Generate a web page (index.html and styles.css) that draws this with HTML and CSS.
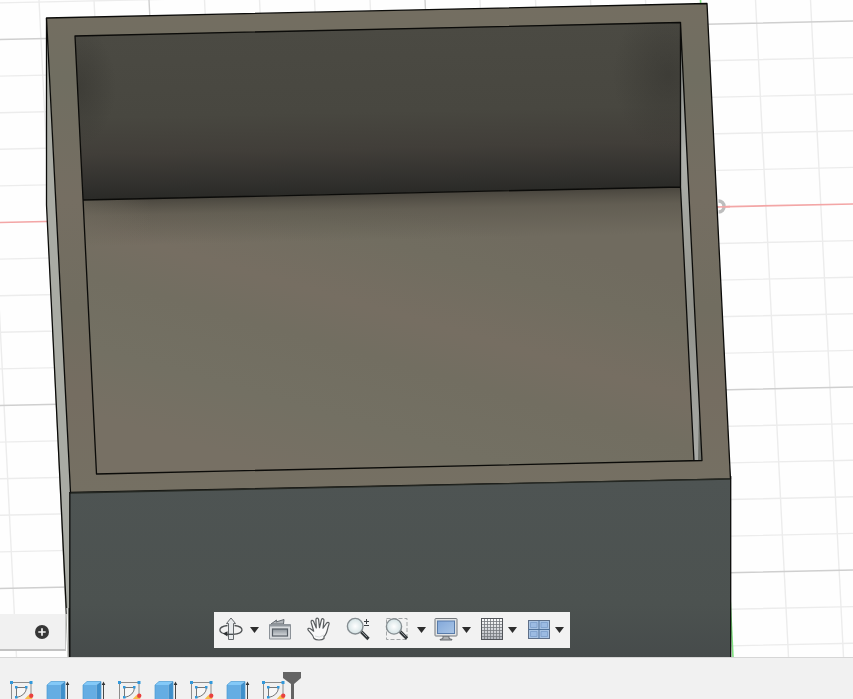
FILE: index.html
```
<!DOCTYPE html>
<html lang="en">
<head>
<meta charset="utf-8">
<title>Model viewport</title>
<link rel="stylesheet" href="styles.css">
</head>
<body>
<div class="app">
<main class="viewport">
<svg class="scene" viewBox="0 0 853 657">
  <defs>
    <linearGradient id="rim" x1="0" y1="0" x2="0" y2="1"><stop offset="0" stop-color="#746e61"/><stop offset=".15" stop-color="#706e61"/><stop offset=".4" stop-color="#756e62"/><stop offset=".62" stop-color="#716d60"/><stop offset=".8" stop-color="#756d61"/><stop offset="1" stop-color="#757063"/></linearGradient>
    <linearGradient id="back" gradientUnits="userSpaceOnUse" x1="380" y1="28" x2="383.5" y2="195"><stop offset="0" stop-color="#4b4a43"/><stop offset=".5" stop-color="#484740"/><stop offset=".72" stop-color="#413e39"/><stop offset=".9" stop-color="#32312e"/><stop offset="1" stop-color="#292926"/></linearGradient>
    <linearGradient id="floor" gradientUnits="userSpaceOnUse" x1="400" y1="200" x2="320" y2="480"><stop offset="0" stop-color="#706b5f"/><stop offset=".15" stop-color="#716d60"/><stop offset=".38" stop-color="#766e62"/><stop offset=".54" stop-color="#726e61"/><stop offset=".78" stop-color="#737063"/><stop offset="1" stop-color="#777064"/></linearGradient>
    <linearGradient id="contact" gradientUnits="userSpaceOnUse" x1="380" y1="193.500" x2="381" y2="240"><stop offset="0" stop-color="#3c3933" stop-opacity=".75"/><stop offset=".35" stop-color="#49453c" stop-opacity=".35"/><stop offset="1" stop-color="#49453c" stop-opacity="0"/></linearGradient>
    <linearGradient id="front" x1="0" y1="0" x2="0" y2="1"><stop offset="0" stop-color="#4e5453"/><stop offset=".7" stop-color="#4c5250"/><stop offset="1" stop-color="#464b4b"/></linearGradient>
    <linearGradient id="slot" x1="0" y1="0" x2="0" y2="1"><stop offset="0" stop-color="#777b78"/><stop offset=".3" stop-color="#aeb0ab"/><stop offset=".65" stop-color="#91928b"/><stop offset="1" stop-color="#a8aaa6"/></linearGradient>
    <radialGradient id="corner"><stop offset="0" stop-color="#302f2b" stop-opacity=".45"/><stop offset="1" stop-color="#302f2b" stop-opacity="0"/></radialGradient>
    <linearGradient id="lift"><stop offset="0" stop-color="#736e61" stop-opacity=".45"/><stop offset="1" stop-color="#736e61" stop-opacity="0"/></linearGradient>
    <clipPath id="wall"><path d="M75 36 680 22V187L83 200Z"/></clipPath>
  </defs>
  <rect class="paper" width="853" height="657"/>
  <g class="grid-minor">
    <path d="M0 2.9 853-15.6M0 76.1 853 57.6M0 112.7 853 94.2M0 149.3 853 130.8M0 185.9 853 167.4M0 259.1 853 240.6M0 295.7 853 277.2M0 332.3 853 313.8M0 368.9 853 350.4M0 442.1 853 423.6M0 478.7 853 460.2M0 515.3 853 496.8M0 551.9 853 533.4M0 625.1 853 606.6M0 661.7 853 643.2"/>
    <path d="M-16 0 16.5 657M39 0 72 657M94 0 127 657M204.5 0 237 657M259.5 0 292 657M314.5 0 347 657M370 0 403 657M480 0 513 657M535.5 0 568 657M590.5 0 623 657M645.5 0 678 657M755.5 0 788.5 657M810.5 0 843.5 657"/>
  </g>
  <path class="grid-major" d="M0 39.5 853 21M0 405.5 853 387M0 588.5 853 570M149 0 182 657M425 0 458 657"/>
  <path class="axis-x" d="M0 222.5 853 204"/>
  <path class="axis-y" d="M700.5 0 733 657"/>
  <path class="origin" d="M718.500 201A5.500 5.500 0 0 1 718.500 212"/>
  <path class="axis-x" d="M718 207 730 206.7"/>
  <path d="M46.5 18V205L67.5 657H70.5V492Z" fill="#a9aba4"/>
  <path class="edge" d="M46.5 18V205L66.500 614"/>
  <path d="M67 608 68.500 657" stroke="#fff" stroke-width="1"/>
  <path d="M69.500 608 69.500 657" stroke="#111" stroke-width="1.800"/>
  <path d="M46.500 18 707 3.500 730.500 479 70.500 492.500Z" fill="url(#rim)" class="edge"/>
  <path d="M70 493 730.500 479V658H69.500Z" fill="url(#front)"/>
  <path class="edge soft" d="M70 493 730.500 479"/>
  <path class="edge" d="M730.700 476V657M69.800 492V657"/>
  <path d="M75 36 680 22V187L83 200Z" fill="url(#back)"/>
  <g clip-path="url(#wall)"><ellipse cx="78" cy="86" rx="38" ry="60" fill="url(#corner)"/><ellipse cx="668" cy="75" rx="55" ry="75" fill="url(#corner)"/></g>
  <path d="M83 200 680 187 694 461 96.500 474Z" fill="url(#floor)"/>
  <path d="M83 200 680 187 682.500 234 85.500 247Z" fill="url(#contact)"/>
  <path d="M83 200 150 198.500 152 245 85.500 247Z" fill="url(#lift)"/>
  <path d="M680.500 22 702 460.500 694 461 680.500 187Z" fill="url(#slot)"/>
  <path d="M699 410 702 460.500 698 461Z" fill="#555951" opacity=".7"/>
  <path class="edge" d="M75 36 680.500 22.500 702 460.500 96.500 474ZM83 200 680.500 187M680.500 22V187L694 461"/>
</svg>
<aside class="browser-stub">
  <svg width="16" height="16" viewBox="0 0 16 16"><circle cx="8" cy="8" r="7" fill="#373737"/><path d="M8 4.300V11.700M4.300 8H11.700" stroke="#f4f4f4" stroke-width="1.700"/></svg>
</aside>
<nav class="toolbar">
  <svg class="tool orbit" viewBox="0 0 24 24">
    <path d="M8.500 8.500C-1.500 9.800-2 16.500 9 17.300M15.500 8.500C25.500 9.800 26 16.500 14 17.300" fill="none" stroke="#4e5153" stroke-width="1.300"/>
    <path d="M12 1 16.500 6.500H14.500V22.500H9.500V6.500H7.500Z" fill="#e9ebed" stroke="#65696c"/>
    <path d="M9 17.300H14" stroke="#44484a" stroke-width="1.300"/><path d="M4 16.500 8.500 14.300V19.500Z" fill="#2d3032"/>
  </svg>
  <i class="caret c1"></i>
  <svg class="tool look" viewBox="0 0 24 24">
    <defs><linearGradient id="m" x1="0" y1="0" x2="0" y2="1"><stop offset="0" stop-color="#8c939a"/><stop offset="1" stop-color="#d6dadd"/></linearGradient></defs>
    <path d="M3 7 8.500 3 8 5 16 2.500 15.500 7Z" fill="#b3b7bb" stroke="#666c72"/>
    <path d="M1.500 7.500H22.500V22H1.500Z" fill="#d8dbde" stroke="#8c9298"/><path d="M2 8.500H22" stroke="#92989e" stroke-width="2"/>
    <rect x="4.500" y="12" width="15" height="7" fill="url(#m)" stroke="#545b63" stroke-width="1.200"/>
  </svg>
  <svg class="tool hand" viewBox="0 0 24 24">
    <path d="M7 21.500C6.500 18 3.500 16 1.200 13.200C0 11.200 2.300 10.700 3.800 12L6.700 14.200 4.200 5.500C3.600 3.100 5.800 2.500 6.600 4.500L9.300 11 8.900 2.700C9 .700 11.300.700 11.600 2.700L12.500 10.700 14.500 2.700C15.200.900 17.300 1.600 16.900 3.700L16 11.200 19.700 6C21 4.600 22.800 5.600 21.900 7.500C20.200 11.200 20.600 16.500 17 19.500V21.500C15 23.500 9 23.500 7 21.500Z" fill="#fafafa" stroke="#585c5e" stroke-width="1.200" stroke-linejoin="round"/>
    <path d="M8 19Q12 21.500 17 18" stroke="#d9dcdd" fill="none"/>
  </svg>
  <svg class="tool zoom" viewBox="0 0 24 24">
    <defs><radialGradient id="g"><stop offset="0" stop-color="#fff"/><stop offset="1" stop-color="#d5e3e5"/></radialGradient></defs>
    <path d="M15 14.500 22.500 22" stroke="#33383b" stroke-width="3.200"/><path d="M15.500 14.500 21 20" stroke="#a8adb0" stroke-width=".8"/>
    <circle cx="9.200" cy="9.200" r="7.800" fill="url(#g)" stroke="#858d91" stroke-width="1.400"/>
    <path d="M18 4.500H23M20.500 2V7M18 8.500H23" stroke="#3b3f42" stroke-width="1"/>
  </svg>
  <svg class="tool fit" viewBox="0 0 24 24">
    <rect x="1.500" y="1.500" width="20.500" height="21" fill="none" stroke="#a3a6a8" stroke-dasharray="4 2"/>
    <path d="M15 14.500 22 21.500" stroke="#33383b" stroke-width="3.200"/><path d="M15.500 14.500 20.500 19.500" stroke="#a8adb0" stroke-width=".8"/>
    <circle cx="9" cy="9.500" r="7.600" fill="url(#g)" stroke="#858d91" stroke-width="1.400"/>
  </svg>
  <i class="caret c2"></i>
  <svg class="tool display" viewBox="0 0 24 24">
    <defs><linearGradient id="b" x1="0" y1="0" x2="1" y2="1"><stop offset="0" stop-color="#83a8da"/><stop offset="1" stop-color="#a9c5e6"/></linearGradient></defs>
    <path d="M9 19H15V21.500L18 22.500V23H6V22.500L9 21.500Z" fill="#afb2b4" stroke="#666a6e"/>
    <rect x="1" y="1.500" width="22" height="17.500" rx=".7" fill="#e2e4e5" stroke="#72777c"/><rect x="3.500" y="4" width="17" height="12.500" fill="url(#b)" stroke="#587ba9"/>
  </svg>
  <i class="caret c3"></i>
  <svg class="tool mesh" viewBox="0 0 24 24">
    <defs><linearGradient id="h" x1="0" y1="0" x2="0" y2="1"><stop offset="0" stop-color="#fff"/><stop offset="1" stop-color="#b3b6bd"/></linearGradient></defs>
    <rect x="1.500" y="1.500" width="21" height="21" fill="url(#h)" stroke="#515459"/><path d="M4.500 2V22M7.500 2V22M10.500 2V22M13.500 2V22M16.500 2V22M19.500 2V22M2 4.500H22M2 7.500H22M2 10.500H22M2 13.500H22M2 16.500H22M2 19.500H22" stroke="#75787e" stroke-width=".8"/>
  </svg>
  <i class="caret c4"></i>
  <svg class="tool panes" viewBox="0 0 24 24">
    <rect x="1.500" y="3.500" width="21" height="18" fill="#a9c4e4" stroke="#5f6f87"/><path d="M12 3V22M1 12.500H23" stroke="#52739b"/><path d="M3.500 5.500H10V10.500H3.500ZM14 5.500H20.500V10.500H14ZM3.500 14.500H10V19.500H3.500ZM14 14.500H20.500V19.500H14Z" fill="#9cbbe2" stroke="#7b9dca" stroke-width=".8"/>
  </svg>
  <i class="caret c5"></i>
</nav>
</main>
<footer class="timeline">
  <svg class="symbols"><defs>
    <symbol id="sketch" viewBox="0 0 24 24">
      <path d="M1.500 24V1.500H21V13" fill="none" stroke="#8c8c8c"/><path d="M6.500 17V6.500H16.500Q16 14.500 6.500 16.500" fill="#f7f7f7" stroke="#777"/>
      <path d="M0 0H3V3H0ZM19.500 0H22.500V3H19.500ZM5 5H7.500V7.500H5ZM15 5H17.500V7.500H15ZM5 15H7.500V17.500H5Z" fill="#3299dc"/>
      <path d="M12 21 18.500 14 22.500 17.500 17 24H11Z" fill="#f7bd4e"/><circle cx="21.200" cy="14.700" r="2.200" fill="#e9413f"/>
    </symbol>
    <symbol id="extrude" viewBox="0 0 24 24">
      <path d="M1 4 5 .500H19L14.500 4Z" fill="#83c9f8"/><path d="M1 4H14.500V24H1Z" fill="#65ade3"/><path d="M14.500 4 19 .500V20L14.500 24Z" fill="#3f8fcb"/>
      <path d="M1 24V4L5 .500H19V20" fill="none" stroke="#4b9bd3" stroke-width=".7"/><path d="M21.500 3V24" stroke="#484848"/><path d="M19.700 4 21.500 .500 23.300 4Z" fill="#333"/>
    </symbol>
  </defs></svg>
  <svg class="feature"><use href="#sketch"/></svg>
  <svg class="feature"><use href="#extrude"/></svg>
  <svg class="feature"><use href="#extrude"/></svg>
  <svg class="feature"><use href="#sketch"/></svg>
  <svg class="feature"><use href="#extrude"/></svg>
  <svg class="feature"><use href="#sketch"/></svg>
  <svg class="feature"><use href="#extrude"/></svg>
  <svg class="feature"><use href="#sketch"/></svg>
  <svg class="marker" viewBox="0 0 18 28"><path d="M0 0H18V6L11 12V28H8V12L0 6Z" fill="#646464"/></svg>
</footer>
</div>
</body>
</html>
```
FILE: styles.css
```
body { margin: 0; overflow: hidden; font-family: "Liberation Sans", sans-serif; }
.app { display: flex; flex-direction: column; width: 853px; height: 699px; overflow: hidden; background: #f1f1f1; }
.viewport { position: relative; height: 657px; flex: none; }
.scene { display: block; width: 853px; height: 657px; }
.paper { fill: #fefefe; }
.grid-minor { fill: none; stroke: #ececec; stroke-width: 1.4; }
.grid-major { fill: none; stroke: #cfcfcf; stroke-width: 1.4; }
.axis-x { fill: none; stroke: #f3a6a6; stroke-width: 1.7; }
.axis-y { fill: none; stroke: #7fe07f; stroke-width: 1.6; }
.origin { fill: #fff; stroke: #bdbdbd; stroke-width: 3.5; }
.edge { stroke: #0b0b09; stroke-width: 1.3; stroke-linejoin: round; }
path.edge:not([fill]) { fill: none; }
.soft { stroke: #242722; }
.browser-stub { position: absolute; left: 0; top: 614px; width: 50px; height: 35px; display: flex; align-items: center; justify-content: flex-end; padding-right: 15px; padding-top: 1px; height: 34px; background: #f1f1f1; border-right: 1px solid #c8c8c8; border-bottom: 2px solid #c2c2c2; }
.toolbar { position: absolute; left: 214px; top: 612px; width: 356px; height: 36px; display: flex; align-items: center; background: #f2f2f2; }
.tool { width: 24px; height: 24px; flex: none; margin-top: -2px; }
.orbit { margin-left: 5px; }
.look { margin-left: 9px; }
.hand, .zoom, .fit { margin-left: 15px; }
.display { margin-left: 8px; }
.mesh { margin-left: 9px; }
.panes { margin-left: 10px; }
.caret { width: 9px; height: 6px; flex: none; background: #2d2d2d; clip-path: polygon(0 0, 100% 0, 50% 100%); }
.c1 { margin-left: 7px; }
.c2 { margin-left: 8px; }
.c3, .c4, .c5 { margin-left: 4px; }
.timeline { position: relative; flex: 1; display: flex; gap: 12px; box-sizing: border-box; padding: 23px 0 0 10px; overflow: hidden; background: #f1f1f1; border-top: 1px solid #d6d6d6; }
.symbols { position: absolute; width: 0; height: 0; }
.feature { width: 24px; height: 24px; flex: none; }
.marker { width: 18px; height: 28px; flex: none; margin: -9px 0 0 -15px; }
```
